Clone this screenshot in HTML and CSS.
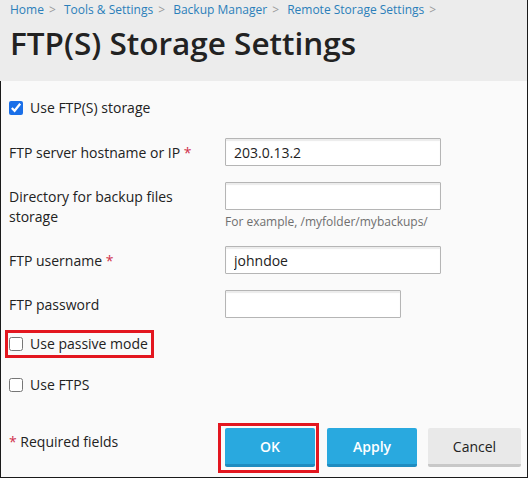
FILE: index.html
```html
<!DOCTYPE html>
<html lang="en">
<head>
    <meta charset="UTF-8">
    <meta name="viewport" content="width=device-width, initial-scale=1.0">
    <title>FTP(S) Storage Settings</title>
    <link rel="stylesheet" href="styles.css">
</head>
<body>
    <div class="page">
        <header class="page-header">
            <nav class="breadcrumbs">
                <a href="#">Home</a><span class="sep">&gt;</span>
                <a href="#">Tools &amp; Settings</a><span class="sep">&gt;</span>
                <a href="#">Backup Manager</a><span class="sep">&gt;</span>
                <a href="#">Remote Storage Settings</a><span class="sep">&gt;</span>
            </nav>
            <h1>FTP(S) Storage Settings</h1>
        </header>

        <form class="settings">
            <label class="check first">
                <input type="checkbox" checked> Use FTP(S) storage
            </label>

            <div class="row r-host">
                <label class="field-label">FTP server hostname or IP <span class="req">*</span></label>
                <div class="field"><input type="text" class="text" value="203.0.13.2"></div>
            </div>

            <div class="row r-dir">
                <label class="field-label">Directory for backup files storage</label>
                <div class="field">
                    <input type="text" class="text" value="">
                    <div class="hint">For example, /myfolder/mybackups/</div>
                </div>
            </div>

            <div class="row r-user">
                <label class="field-label">FTP username <span class="req">*</span></label>
                <div class="field"><input type="text" class="text" value="johndoe"></div>
            </div>

            <div class="row r-pass">
                <label class="field-label">FTP password</label>
                <div class="field"><input type="password" class="text short" value=""></div>
            </div>

            <label class="check passive marked">
                <input type="checkbox"> Use passive mode
            </label>

            <label class="check ftps">
                <input type="checkbox"> Use FTPS
            </label>

            <div class="actions">
                <div class="required"><span class="req">*</span> Required fields</div>
                <div class="buttons">
                    <span class="ok-mark"><button type="button" class="btn primary ok">OK</button></span>
                    <button type="button" class="btn primary">Apply</button>
                    <button type="button" class="btn">Cancel</button>
                </div>
            </div>
        </form>
    </div>
</body>
</html>
```

FILE: styles.css
```css
body {
    margin: 0;
    font-family: "Open Sans", "DejaVu Sans", sans-serif;
    font-size: 14px;
    color: #222;
    background: #fafafa;
}
.page {
    width: 528px;
    height: 478px;
    box-sizing: border-box;
    border-right: 1px solid #1a1a1a;
    border-bottom: 1px solid #1a1a1a;
    display: flex;
    flex-direction: column;
}
.page-header {
    background: #ececec;
    height: 81px;
    padding: 2px 10px 0;
    box-sizing: border-box;
}
.breadcrumbs {
    font-size: 12px;
    line-height: 16px;
    white-space: nowrap;
}
.breadcrumbs a {
    color: #2b7fba;
    text-decoration: none;
}
.breadcrumbs .sep {
    color: #9a9a9a;
    margin: 0 5px;
}
h1 {
    margin: 5px 0 0;
    font-size: 31.5px;
    font-weight: 600;
    line-height: 40px;
    color: #222;
}
.settings {
    flex: 1;
    border-left: 1px solid #1a1a1a;
    padding: 0 2px 0 8px;
    display: flex;
    flex-direction: column;
}
.check {
    display: flex;
    align-items: center;
    height: 20px;
    line-height: 20px;
    align-self: flex-start;
}
.check input {
    width: 14px;
    height: 14px;
    margin: 0 7px 0 0;
    accent-color: #1a6fe8;
}
.check.first { margin-top: 17px; }
.check.passive { margin-top: 16px; }
.check.ftps { margin-top: 21px; }
.marked {
    outline: 3px solid #e3161f;
    outline-offset: 1px;
    padding-right: 2px;
}
.row {
    display: grid;
    grid-template-columns: 216px 1fr;
}
.r-host { margin-top: 20px; }
.r-dir { margin-top: 16px; }
.r-user { margin-top: 16px; }
.r-pass { margin-top: 16px; }
.field-label {
    padding-top: 5px;
    line-height: 20px;
    padding-right: 20px;
}
.req { color: #d0304c; }
.text {
    display: block;
    box-sizing: border-box;
    width: 216px;
    height: 28px;
    margin: 0;
    border: 1px solid #b5b5b5;
    border-radius: 1px;
    box-shadow: inset 0 2px 1px #ececec;
    background: #fff;
    font: 14px "Open Sans", "DejaVu Sans", sans-serif;
    color: #222;
    padding: 0 8px;
}
.text.short { width: 176px; }
.hint {
    margin-top: 4px;
    font-size: 12px;
    line-height: 16px;
    color: #6f6f6f;
}
.actions {
    margin-top: 28px;
    display: flex;
    align-items: flex-start;
}
.required {
    flex-shrink: 0;
    width: 209px;
    margin-top: 9px;
    line-height: 20px;
}
.buttons {
    display: flex;
    align-items: flex-start;
}
.ok-mark {
    display: block;
    border: 3px solid #e3161f;
    padding: 2px 1px 3px 4px;
    margin-right: 8px;
}
.btn {
    display: block;
    box-sizing: border-box;
    height: 39px;
    width: 93px;
    margin: 5px 0 0;
    padding: 0;
    border: 0;
    border-bottom: 3px solid #c8c8c8;
    border-radius: 2px;
    background: #e9e9e9;
    color: #222;
    font: 14px "Open Sans", "DejaVu Sans", sans-serif;
}
.btn.primary {
    width: 90px;
    margin-right: 11px;
    background: #29a9df;
    border-bottom-color: #1f8cc0;
    color: #fff;
    font-weight: 600;
}
.btn.ok {
    margin: 0;
}
```
